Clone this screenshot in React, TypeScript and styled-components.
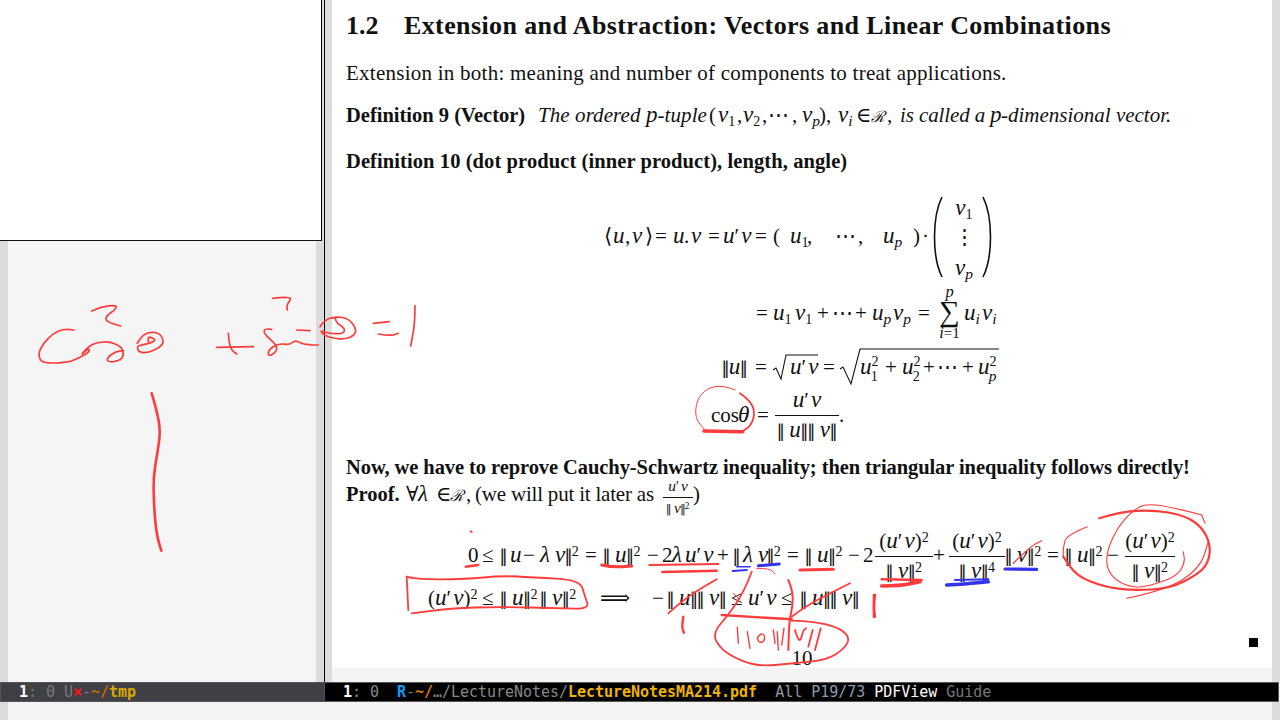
import React from 'react';
import styled, { createGlobalStyle } from 'styled-components';

const SERIF = '"Liberation Serif", "DejaVu Serif", serif';
const MONO = '"DejaVu Sans Mono", monospace';

const Global = createGlobalStyle`
  html, body { margin: 0; padding: 0; background: #f4f4f4; overflow: hidden; }
`;

const Screen = styled.div`
  position: relative;
  width: 1280px;
  height: 720px;
  display: flex;
  flex-direction: column;
  overflow: hidden;
`;
const Windows = styled.div`
  display: flex;
  height: 682px;
`;
const Fringe = styled.div<{ $w: number }>`
  flex: none;
  width: ${p => p.$w}px;
  background: #dcdcdc;
`;
const ScratchPane = styled.div`
  flex: none;
  width: 308px;
  background: #f5f5f5;
`;
const Divider = styled.div`
  flex: none;
  width: 1px;
  background: #000;
`;
const DocPane = styled.div`
  flex: 1;
  background: #f4f4f4;
`;
const Page = styled.div`
  height: 668px;
  background: #fff;
  color: #111;
  font-family: ${SERIF};
  font-size: 21px;
  opacity: 0.999;
`;
const Row = styled.div<{ $h: number; $base: number }>`
  position: relative;
  display: flex;
  align-items: baseline;
  height: ${p => p.$h}px;
  line-height: 1;
  white-space: pre;
  &::before {
    content: '';
    flex: none;
    width: 0;
    height: ${p => p.$base}px;
  }
`;
const Tok = styled.div<{ $w: number; $mid?: boolean }>`
  flex: none;
  width: ${p => p.$w}px;
  ${p => (p.$mid ? 'align-self: center;' : '')}
`;
const Txt = styled.span<{ $ls?: number; $bold?: boolean; $it?: boolean; $size?: number }>`
  letter-spacing: ${p => p.$ls ?? 0}px;
  font-weight: ${p => (p.$bold ? 700 : 400)};
  font-style: ${p => (p.$it ? 'italic' : 'normal')};
  ${p => (p.$size ? `font-size: ${p.$size}px;` : '')}
`;
const I = styled.i`
  font-style: italic;
  font-size: 1.1em;
`;
const Script = styled.i`
  font-style: italic;
  font-size: 0.74em;
`;
const Prime = styled.span`
  margin-right: 2px;
`;
const Bars = styled.span`
  font-family: "DejaVu Sans", sans-serif;
  font-size: 0.84em;
  margin: 0 -1px;
`;
const Sup = styled.sup<{ $high?: boolean }>`
  font-size: 0.67em;
  line-height: 0;
  vertical-align: ${p => (p.$high ? '0.6em' : '0.4em')};
`;
const Sub = styled.sub<{ $pull?: boolean }>`
  font-size: 0.67em;
  line-height: 0;
  vertical-align: ${p => (p.$pull ? '-0.5em' : '-0.3em')};
  ${p => (p.$pull ? 'margin-left: -0.55em;' : '')}
`;
const FracBox = styled.div<{ $part: number }>`
  display: flex;
  flex-direction: column;
  align-items: stretch;
  --part: ${p => p.$part}px;
`;
const FracTop = styled.div`
  height: var(--part);
  display: flex;
  justify-content: center;
  align-items: flex-end;
  padding-bottom: 3px;
  box-sizing: border-box;
`;
const FracBar = styled.div`
  height: 1px;
  background: #111;
`;
const FracBottom = styled.div`
  height: var(--part);
  display: flex;
  justify-content: center;
  align-items: flex-start;
  padding-top: 2px;
  box-sizing: border-box;
`;
const SmallFrac = styled.div`
  font-size: 14px;
`;
const Column = styled.div`
  display: flex;
  flex-direction: column;
  align-items: center;
`;
const Cell = styled.div`
  height: 30px;
  line-height: 30px;
`;
const LimitCell = styled.div`
  height: 15px;
  line-height: 15px;
  font-size: 15px;
`;
const SigmaCell = styled.div`
  height: 26px;
  line-height: 24px;
  font-size: 29px;
`;
const Drawn = styled.svg`
  display: block;
  overflow: visible;
`;
const QedRow = styled.div`
  height: 32px;
  display: flex;
  justify-content: flex-end;
  align-items: flex-end;
  padding-right: 14px;
`;
const Qed = styled.div`
  width: 9px;
  height: 9px;
  background: #000;
`;
const PageNo = styled.div`
  height: 21px;
  line-height: 21px;
  padding-top: 1px;
  box-sizing: border-box;
  text-align: center;
`;
const ModeRow = styled.div`
  display: flex;
  height: 20px;
  font-family: ${MONO};
  font-size: 15px;
  letter-spacing: -0.03px;
  line-height: 18px;
  white-space: pre;
`;
const ModeLine = styled.div<{ $active?: boolean }>`
  box-sizing: border-box;
  flex: ${p => (p.$active ? '1' : 'none')};
  width: ${p => (p.$active ? 'auto' : '325px')};
  margin-right: ${p => (p.$active ? '1px' : '0')};
  padding-left: 18px;
  background: ${p => (p.$active ? '#000' : '#3f3f46')};
  border: 1px solid #555;
  border-left-width: ${p => (p.$active ? 0 : 1)}px;
  color: #888;
`;
const Seg = styled.span<{ $c: string; $b?: boolean }>`
  color: ${p => p.$c};
  font-weight: ${p => (p.$b ? 700 : 400)};
`;
const Mini = styled.div`
  flex: 1;
  display: flex;
  justify-content: space-between;
`;
const Floating = styled.div`
  position: absolute;
  left: 0;
  top: 0;
  width: 322px;
  height: 241px;
  box-sizing: border-box;
  background: #fff;
  border-right: 1px solid #000;
  border-bottom: 1px solid #10101e;
`;
const Ink = styled.svg`
  position: absolute;
  left: 0;
  top: 0;
  pointer-events: none;
`;

type Item = [number, React.ReactNode, boolean?];
const Line: React.FC<{ h: number; base: number; items: Item[] }> = ({ h, base, items }) => (
  <Row $h={h} $base={base}>
    <Tok $w={items[0][0] - 332} />
    {items.map((it, i) => (
      <Tok key={i} $mid={it[2]} $w={(items[i + 1] ? items[i + 1][0] : it[0] + 20) - it[0]}>
        {it[1]}
      </Tok>
    ))}
  </Row>
);

const Frac: React.FC<{ top: React.ReactNode; bottom: React.ReactNode; part?: number }> = ({ top, bottom, part = 26 }) => (
  <FracBox $part={part}>
    <FracTop><span>{top}</span></FracTop>
    <FracBar />
    <FracBottom><span>{bottom}</span></FracBottom>
  </FracBox>
);

const B = <Bars>∥</Bars>;
const nu = <I>v</I>;
const uu = <I>u</I>;
const uPv = <><I>u</I><Prime>′</Prime><I>v</I></>;
const uPv2 = <>(<I>u</I><Prime>′</Prime><I>v</I>)<Sup>2</Sup></>;
const normV = <>{B} <I>v</I>{B}</>;
const normU = <>{B} <I>u</I>{B}</>;
const nv2 = <>{normV}<Sup>2</Sup></>;
const nv4 = <>{normV}<Sup>4</Sup></>;
const nuu2 = <>{normU}<Sup>2</Sup></>;
const rr = <Script>ℛ</Script>;

const RED = '#ff3c3c';
const BLUE = '#3434ee';
type Stroke = { w: number; c?: string; p: number[] };
const group = (ox: number, oy: number, list: Stroke[]) =>
  list.map(s => {
    const pts: [number, number][] = [];
    for (let i = 0; i < s.p.length; i += 2) pts.push([ox + s.p[i] / 3, oy + s.p[i + 1] / 3]);
    let d = `M${pts[0][0].toFixed(1)} ${pts[0][1].toFixed(1)}`;
    for (let i = 1; i < pts.length - 1; i++) {
      const mx = (pts[i][0] + pts[i + 1][0]) / 2;
      const my = (pts[i][1] + pts[i + 1][1]) / 2;
      d += `Q${pts[i][0].toFixed(1)} ${pts[i][1].toFixed(1)} ${mx.toFixed(1)} ${my.toFixed(1)}`;
    }
    const last = pts[pts.length - 1];
    d += `L${last[0].toFixed(1)} ${last[1].toFixed(1)}`;
    return { d, w: s.w, c: s.c ?? RED };
  });

const strokes = [
  ...group(0, 230, [
    { w: 1.7, p: [275, 243, 300, 230, 352, 225, 345, 240, 318, 258, 318, 275, 362, 288] },
    { w: 1.7, p: [222, 300, 195, 295, 160, 310, 130, 340, 115, 370, 122, 395, 150, 400, 205, 397, 235, 385, 270, 365, 265, 355, 240, 378, 265, 350, 290, 337, 330, 335, 365, 350, 372, 375, 360, 392, 325, 397, 320, 385, 345, 365, 370, 362] },
    { w: 1.7, p: [412, 340, 425, 318, 450, 305, 480, 310, 492, 335, 480, 352, 445, 368, 418, 368, 410, 350, 425, 345, 455, 338, 468, 330, 445, 318, 445, 335] },
    { w: 1.7, p: [650, 352, 760, 350] },
    { w: 1.7, p: [685, 310, 688, 355, 710, 372] },
    { w: 1.7, p: [818, 205, 880, 197, 860, 225, 862, 240] },
    { w: 1.7, p: [815, 298, 795, 295, 790, 310, 830, 345, 830, 365, 805, 380, 805, 360, 835, 340, 870, 345, 885, 330, 905, 340, 925, 345, 955, 345] },
    { w: 1.7, p: [890, 300, 930, 302] },
    { w: 1.7, p: [960, 290, 975, 268, 1010, 260, 1045, 265, 1068, 295, 1065, 315, 1035, 328, 1000, 325, 970, 315, 960, 300, 985, 310, 1030, 312, 1035, 295, 1010, 280, 1005, 262] },
    { w: 1.7, p: [1120, 280, 1168, 275] },
    { w: 1.7, p: [1135, 312, 1170, 318, 1195, 310] },
    { w: 1.7, p: [1245, 227, 1245, 280, 1232, 348] },
    { w: 2.6, p: [455, 490, 470, 540, 482, 605, 470, 680, 460, 745, 462, 830, 470, 915, 484, 962] },
  ]),
  ...group(590, 185, [
    { w: 1, p: [435, 615, 400, 600, 350, 610, 320, 645, 315, 700, 345, 735] },
    { w: 1.8, p: [450, 625, 485, 650, 495, 690, 480, 725, 458, 738] },
    { w: 3.6, p: [342, 738, 458, 740] },
  ]),
  ...group(400, 500, [
    { w: 2, p: [212, 94, 215, 96] },
    { w: 2.4, p: [197, 200, 235, 195] },
    { w: 3, p: [605, 195, 635, 202, 695, 198] },
    { w: 2, p: [748, 195, 955, 192] },
    { w: 2.4, p: [787, 216, 950, 212] },
    { w: 2.2, c: BLUE, p: [998, 213, 1040, 210] },
    { w: 1.6, c: BLUE, p: [1010, 200, 1050, 200] },
    { w: 3, c: BLUE, p: [1075, 197, 1138, 192] },
    { w: 1, p: [1070, 205, 1110, 205, 1125, 222] },
    { w: 1.8, p: [20, 230, 40, 238, 200, 238, 300, 227, 400, 232, 540, 240, 555, 290, 568, 327, 480, 325, 300, 320, 150, 325, 35, 340] },
    { w: 1.8, p: [20, 230, 25, 330] },
  ]),
  ...group(660, 570, [
    { w: 1.8, p: [275, 5, 255, 60, 205, 135, 165, 180, 165, 215, 205, 255, 290, 290, 400, 280, 500, 270, 555, 235, 570, 200, 530, 170, 460, 155, 395, 152] },
    { w: 2, p: [385, 30, 398, 60, 398, 110, 388, 150, 385, 240] },
    { w: 2.4, p: [185, 135, 395, 148] },
    { w: 1.8, p: [395, 140, 440, 105, 570, 40] },
    { w: 1.8, p: [25, 130, 80, 80, 170, 28] },
    { w: 1, p: [220, 70, 240, 90] },
    { w: 2.4, p: [70, 140, 65, 170, 72, 188] },
    { w: 2.4, p: [645, 75, 640, 110, 645, 140] },
    { w: 1.4, p: [232, 172, 235, 220] },
    { w: 1.4, p: [262, 185, 270, 235] },
    { w: 1.4, p: [292, 205, 300, 190, 315, 195, 312, 215, 298, 218, 292, 205] },
    { w: 1.4, p: [340, 180, 345, 220] },
    { w: 1.4, p: [352, 185, 355, 240] },
    { w: 1.4, p: [372, 175, 365, 225] },
    { w: 1.8, p: [405, 180, 418, 225, 430, 180, 438, 175] },
    { w: 1.8, p: [458, 180, 445, 230] },
    { w: 1.8, p: [482, 175, 465, 240] },
  ]),
  ...group(800, 500, [
    { w: 3, p: [0, 210, 100, 208] },
    { w: 2.4, p: [245, 238, 365, 240] },
    { w: 3.6, p: [245, 258, 300, 258, 360, 245] },
    { w: 2, c: BLUE, p: [465, 240, 565, 238] },
    { w: 3.6, c: BLUE, p: [440, 255, 500, 252, 565, 245] },
    { w: 3.2, c: BLUE, p: [615, 207, 710, 208] },
    { w: 1.2, p: [640, 190, 690, 140, 725, 122] },
    { w: 2.6, p: [222, 285, 222, 350] },
    { w: 2.2, p: [898, 55, 960, 35, 1060, 30, 1150, 45, 1205, 80, 1232, 135, 1225, 190, 1190, 225, 1110, 265, 1000, 272, 910, 260, 830, 228, 790, 170] },
    { w: 1.1, p: [862, 80, 800, 105, 790, 140, 790, 170] },
    { w: 1.1, p: [1205, 45, 1215, 70] },
    { w: 1.1, p: [1205, 45, 1130, 25, 1040, 10, 1000, 30, 950, 85, 915, 170, 930, 230, 995, 265, 1060, 255, 1130, 228, 1155, 190, 1150, 155] },
    { w: 1.1, p: [980, 295, 1100, 270, 1200, 205, 1225, 125] },
  ]),
];

export default function App() {
  return (
    <Screen>
      <Global />
      <Windows>
        <Fringe $w={8} />
        <ScratchPane />
        <Fringe $w={8} />
        <Divider />
        <Fringe $w={7} />
        <DocPane>
          <Page>
            <Line h={50} base={34} items={[
              [346, <Txt $bold $size={26}>1.2</Txt>],
              [404, <Txt $bold $size={26} $ls={0.39}>Extension and Abstraction: Vectors and Linear Combinations</Txt>],
            ]} />
            <Line h={40} base={30} items={[
              [346, <Txt $ls={0.25}>Extension in both: meaning and number of components to treat applications.</Txt>],
            ]} />
            <Line h={46} base={32} items={[
              [346, <Txt $bold $size={20.5}>Definition 9 (Vector)</Txt>],
              [538, <Txt $it $ls={0.08}>The ordered <I>p</I>-tuple</Txt>],
              [709, '('], [718, <>{nu}<Sub>1</Sub></>], [737, ','], [743, <>{nu}<Sub>2</Sub></>], [762, ','], [768, '⋯'], [792, ','],
              [802, <>{nu}<Sub><I>p</I></Sub></>], [819, ')'], [826, ','], [838, <>{nu}<Sub><I>i</I></Sub></>], [856, '∈'], [871, rr], [887, <Txt $it>,</Txt>],
              [900, <Txt $it $ls={-0.1}>is called a</Txt>], [990, <I>p</I>], [1001, <Txt $it>-dimensional vector.</Txt>],
            ]} />
            <Line h={46} base={32} items={[
              [346, <Txt $bold $size={20.5} $ls={0.09}>Definition 10 (dot product (inner product), length, angle)</Txt>],
            ]} />
            <Line h={110} base={61} items={[
              [604, '⟨'], [613, uu], [625, ','], [632, nu], [645, '⟩'], [655, '='], [673, uu], [684, '.'], [691, nu], [708, '='], [723, uPv], [755, '='],
              [773, '('], [790, <>{uu}<Sub>1</Sub></>], [807, ','], [835, '⋯'], [858, ','], [883, <>{uu}<Sub><I>p</I></Sub></>], [913, ')'], [922, '·'],
              [933, <Drawn width="10" height="80"><path d="M9 0C3 12 1.5 26 1.5 40C1.5 54 3 68 9 80" fill="none" stroke="#111" strokeWidth="1.6" /></Drawn>, true],
              [946, <Column><Cell>{nu}<Sub>1</Sub></Cell><Cell>⋮</Cell><Cell>{nu}<Sub><I>p</I></Sub></Cell></Column>, true],
              [982, <Drawn width="10" height="80"><path d="M1 0C7 12 8.5 26 8.5 40C8.5 54 7 68 1 80" fill="none" stroke="#111" strokeWidth="1.6" /></Drawn>, true],
            ]} />
            <Line h={40} base={28} items={[
              [756, '='], [773, <>{uu}<Sub>1</Sub></>], [795, <>{nu}<Sub>1</Sub></>], [817, '+'], [832, '⋯'], [855, '+'], [872, <>{uu}<Sub><I>p</I></Sub></>], [893, <>{nu}<Sub><I>p</I></Sub></>], [918, '='],
              [935, <Column><LimitCell><I>p</I></LimitCell><SigmaCell>∑</SigmaCell><LimitCell><I>i</I>=1</LimitCell></Column>, true],
              [964, <>{uu}<Sub><I>i</I></Sub></>], [982, <>{nu}<Sub><I>i</I></Sub></>],
            ]} />
            <Line h={56} base={42} items={[
              [722, <>{B}<I>u</I>{B}</>], [755, '='],
              [773, <Drawn width="17" height="48"><path d="M0 34L3 32L8 43L13 19L45 19" fill="none" stroke="#111" strokeWidth="1.1" /></Drawn>, true],
              [790, uPv], [823, '='],
              [840, <Drawn width="20" height="48"><path d="M0 33L3 31L11 48L20 13L159 13" fill="none" stroke="#111" strokeWidth="1.1" /></Drawn>, true],
              [860, <>{uu}<Sup $high>2</Sup><Sub $pull>1</Sub></>], [885, '+'], [902, <>{uu}<Sup $high>2</Sup><Sub $pull>2</Sub></>], [923, '+'], [937, '⋯'], [962, '+'], [978, <>{uu}<Sup $high>2</Sup><Sub $pull><I>p</I></Sub></>],
            ]} />
            <Line h={54} base={34} items={[
              [711, 'cos'], [738, <I>θ</I>], [757, '='],
              [775, <Frac top={uPv} bottom={<>{normU}{normV}</>} />, true],
              [839, '.'],
            ]} />
            <Line h={40} base={32} items={[
              [346, <Txt $bold $size={20.5} $ls={-0.08}>Now, we have to reprove Cauchy-Schwartz inequality; then triangular inequality follows directly!</Txt>],
            ]} />
            <Line h={30} base={18} items={[
              [346, <Txt $bold $size={20.5}>Proof.</Txt>], [406, '∀'], [418, <I>λ</I>], [436, '∈'], [450, rr], [466, ','],
              [475, <Txt $ls={-0.2}>(we will put it later as</Txt>],
              [663, <SmallFrac><Frac part={15} top={uPv} bottom={nv2} /></SmallFrac>, true],
              [693, ')'],
            ]} />
            <Line h={28} base={4} items={[[346, '']]} />
            <Line h={32} base={22} items={[
              [468, '0'], [482, '≤'], [500, B], [510, uu], [523, '−'], [540, <I>λ</I>], [555, nu], [565, <>{B}<Sup>2</Sup></>], [585, '='],
              [603, nuu2], [647, '−'], [662, '2'], [672, <I>λ</I>], [685, uPv], [717, '+'], [733, B], [743, <I>λ</I>], [758, nu], [767, <>{B}<Sup>2</Sup></>], [787, '='],
              [805, nuu2], [848, '−'], [863, '2'],
              [875, <Frac top={uPv2} bottom={nv2} />, true], [933, '+'],
              [949, <Frac top={uPv2} bottom={nv4} />, true],
              [1005, nv2], [1047, '='], [1065, nuu2], [1107, '−'],
              [1125, <Frac top={uPv2} bottom={nv2} />, true],
              [1175, ''],
            ]} />
            <Line h={43} base={33} items={[
              [428, uPv2], [482, '≤'], [500, nuu2], [540, nv2], [600, '⟹'], [652, '−'], [667, normU], [697, normV], [731, '≤'], [748, uPv], [781, '≤'], [800, normU], [830, normV],
            ]} />
            <QedRow><Qed /></QedRow>
            <PageNo>10</PageNo>
          </Page>
        </DocPane>
        <Fringe $w={8} />
      </Windows>
      <ModeRow>
        <ModeLine>
          <Seg $c="#fff" $b>1</Seg><Seg $c="#777">: 0 U</Seg><Seg $c="#ff1010" $b>×</Seg><Seg $c="#777">-</Seg><Seg $c="#c46a00" $b>~/</Seg><Seg $c="#d8a800" $b>tmp</Seg>
        </ModeLine>
        <ModeLine $active>
          <Seg $c="#fff" $b>1</Seg><Seg $c="#888">: 0  </Seg><Seg $c="#00a0ff" $b>R</Seg><Seg $c="#777">-</Seg><Seg $c="#d97a00" $b>~/</Seg><Seg $c="#888">…/LectureNotes/</Seg><Seg $c="#eeb400" $b>LectureNotesMA214.pdf</Seg><Seg $c="#999">  All </Seg><Seg $c="#8a9ab0">P19/73 </Seg><Seg $c="#fff">PDFView </Seg><Seg $c="#777">Guide</Seg>
        </ModeLine>
      </ModeRow>
      <Mini>
        <Fringe $w={8} />
        <Fringe $w={8} />
      </Mini>
      <Floating />
      <Ink width="1280" height="720">
        {strokes.map((s, i) => (
          <path key={i} d={s.d} fill="none" stroke={s.c} strokeWidth={s.w} strokeLinecap="round" strokeLinejoin="round" />
        ))}
      </Ink>
    </Screen>
  );
}
